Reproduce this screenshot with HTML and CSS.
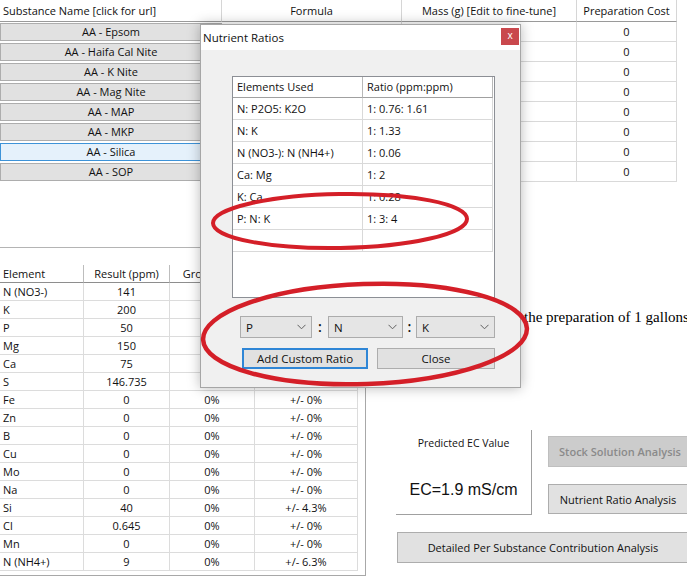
FILE: index.html
```html
<!DOCTYPE html>
<html>
<head>
<meta charset="utf-8">
<link rel="stylesheet" href="styles.css">
</head>
<body>
<div class="app">
  <div class="top-panel">
    <div class="grid-row head">
      <div class="hc left">Substance Name [click for url]</div>
      <div class="hc">Formula</div>
      <div class="hc">Mass (g) [Edit to fine-tune]</div>
      <div class="hc">Preparation Cost</div>
    </div>
    <div class="grid-row"><div class="bc"><button class="sbtn">AA - Epsom</button></div><div class="dc"></div><div class="dc"></div><div class="dc">0</div></div>
    <div class="grid-row"><div class="bc"><button class="sbtn">AA - Haifa Cal Nite</button></div><div class="dc"></div><div class="dc"></div><div class="dc">0</div></div>
    <div class="grid-row"><div class="bc"><button class="sbtn">AA - K Nite</button></div><div class="dc"></div><div class="dc"></div><div class="dc">0</div></div>
    <div class="grid-row"><div class="bc"><button class="sbtn">AA - Mag Nite</button></div><div class="dc"></div><div class="dc"></div><div class="dc">0</div></div>
    <div class="grid-row"><div class="bc"><button class="sbtn">AA - MAP</button></div><div class="dc"></div><div class="dc"></div><div class="dc">0</div></div>
    <div class="grid-row"><div class="bc"><button class="sbtn">AA - MKP</button></div><div class="dc"></div><div class="dc"></div><div class="dc">0</div></div>
    <div class="grid-row"><div class="bc"><button class="sbtn hot">AA - Silica</button></div><div class="dc"></div><div class="dc"></div><div class="dc">0</div></div>
    <div class="grid-row"><div class="bc"><button class="sbtn">AA - SOP</button></div><div class="dc"></div><div class="dc"></div><div class="dc">0</div></div>
  </div>
  <div class="divider"></div>

  <div class="lower">
    <div class="results">
      <div class="rrow rhead"><div class="rh left">Element</div><div class="rh">Result (ppm)</div><div class="rh">Gross Error</div><div class="rh">Instrument Error</div></div>
      <div class="rrow"><div class="rc left">N (NO3-)</div><div class="rc">141</div><div class="rc">0%</div><div class="rc">+/- 0%</div></div>
      <div class="rrow"><div class="rc left">K</div><div class="rc">200</div><div class="rc">0%</div><div class="rc">+/- 0%</div></div>
      <div class="rrow"><div class="rc left">P</div><div class="rc">50</div><div class="rc">0%</div><div class="rc">+/- 0%</div></div>
      <div class="rrow"><div class="rc left">Mg</div><div class="rc">150</div><div class="rc">0%</div><div class="rc">+/- 0%</div></div>
      <div class="rrow"><div class="rc left">Ca</div><div class="rc">75</div><div class="rc">0%</div><div class="rc">+/- 0%</div></div>
      <div class="rrow"><div class="rc left">S</div><div class="rc">146.735</div><div class="rc">0%</div><div class="rc">+/- 0%</div></div>
      <div class="rrow"><div class="rc left">Fe</div><div class="rc">0</div><div class="rc">0%</div><div class="rc">+/- 0%</div></div>
      <div class="rrow"><div class="rc left">Zn</div><div class="rc">0</div><div class="rc">0%</div><div class="rc">+/- 0%</div></div>
      <div class="rrow"><div class="rc left">B</div><div class="rc">0</div><div class="rc">0%</div><div class="rc">+/- 0%</div></div>
      <div class="rrow"><div class="rc left">Cu</div><div class="rc">0</div><div class="rc">0%</div><div class="rc">+/- 0%</div></div>
      <div class="rrow"><div class="rc left">Mo</div><div class="rc">0</div><div class="rc">0%</div><div class="rc">+/- 0%</div></div>
      <div class="rrow"><div class="rc left">Na</div><div class="rc">0</div><div class="rc">0%</div><div class="rc">+/- 0%</div></div>
      <div class="rrow"><div class="rc left">Si</div><div class="rc">40</div><div class="rc">0%</div><div class="rc">+/- 4.3%</div></div>
      <div class="rrow"><div class="rc left">Cl</div><div class="rc">0.645</div><div class="rc">0%</div><div class="rc">+/- 0%</div></div>
      <div class="rrow"><div class="rc left">Mn</div><div class="rc">0</div><div class="rc">0%</div><div class="rc">+/- 0%</div></div>
      <div class="rrow"><div class="rc left">N (NH4+)</div><div class="rc">9</div><div class="rc">0%</div><div class="rc">+/- 6.3%</div></div>
    </div>

    <div class="side">
      <p class="note">the preparation of 1 gallons of nutrient solution</p>
      <div class="ec-row">
        <div class="ec-box">
          <div class="ec-label">Predicted EC Value</div>
          <div class="ec-value">EC=1.9 mS/cm</div>
        </div>
        <div class="btn-col">
          <button class="wbtn stock" disabled>Stock Solution Analysis</button>
          <button class="wbtn ratio">Nutrient Ratio Analysis</button>
        </div>
      </div>
      <button class="wbtn wide">Detailed Per Substance Contribution Analysis</button>
    </div>
  </div>
</div>

<div class="dialog">
  <div class="titlebar">
    <span class="title">Nutrient Ratios</span>
    <span class="close">x</span>
  </div>
  <div class="dbody">
    <div class="rframe">
      <div class="drow dhead"><div class="dh">Elements Used</div><div class="dh">Ratio (ppm:ppm)</div></div>
      <div class="drow"><div class="dc2">N: P2O5: K2O</div><div class="dc2">1: 0.76: 1.61</div></div>
      <div class="drow"><div class="dc2">N: K</div><div class="dc2">1: 1.33</div></div>
      <div class="drow"><div class="dc2">N (NO3-): N (NH4+)</div><div class="dc2">1: 0.06</div></div>
      <div class="drow"><div class="dc2">Ca: Mg</div><div class="dc2">1: 2</div></div>
      <div class="drow"><div class="dc2">K: Ca</div><div class="dc2">1: 0.28</div></div>
      <div class="drow"><div class="dc2">P: N: K</div><div class="dc2">1: 3: 4</div></div>
      <div class="drow"><div class="dc2"></div><div class="dc2"></div></div>
    </div>
    <div class="combos">
      <div class="combo c1"><span>P</span><svg class="chev" width="9" height="6" viewBox="0 0 9 6"><polyline points="0.5,0.8 4.5,4.8 8.5,0.8" fill="none" stroke="#606060" stroke-width="1"/></svg></div>
      <span class="colon s1">:</span>
      <div class="combo c2"><span>N</span><svg class="chev" width="9" height="6" viewBox="0 0 9 6"><polyline points="0.5,0.8 4.5,4.8 8.5,0.8" fill="none" stroke="#606060" stroke-width="1"/></svg></div>
      <span class="colon s2">:</span>
      <div class="combo c3"><span>K</span><svg class="chev" width="9" height="6" viewBox="0 0 9 6"><polyline points="0.5,0.8 4.5,4.8 8.5,0.8" fill="none" stroke="#606060" stroke-width="1"/></svg></div>
    </div>
    <div class="dbtns">
      <button class="dbtn add">Add Custom Ratio</button>
      <button class="dbtn closebtn">Close</button>
    </div>
  </div>
</div>

<svg class="marks" width="687" height="581" viewBox="0 0 687 581">
  <ellipse cx="340" cy="221" rx="127" ry="27" transform="rotate(-1 340 221)" fill="none" stroke="#d41f28" stroke-width="4"/>
  <ellipse cx="365" cy="334" rx="162" ry="50" transform="rotate(-2 365 334)" fill="none" stroke="#d41f28" stroke-width="4.5"/>
</svg>
</body>
</html>
```

FILE: styles.css
```css
* { box-sizing: border-box; }
html, body { margin: 0; padding: 0; }
body {
  width: 687px;
  height: 581px;
  overflow: hidden;
  background: #ffffff;
  font-family: "Open Sans", "Noto Sans", sans-serif;
  font-size: 11px;
  color: #111;
  position: relative;
}
button { font-family: inherit; font-size: 11px; color: #111; padding: 0; margin: 0; }

/* top substance table */
.top-panel {
  height: 247px;
}
.divider {
  width: 366px;
  border-top: 1px solid #b4b4b4;
}
.grid-row {
  display: grid;
  grid-template-columns: 222px 180px 175px 100px;
  height: 20px;
}
.grid-row.head { height: 22px; }
.hc {
  border-bottom: 1px solid #9a9a9a;
  border-right: 1px solid #d6d6d6;
  text-align: center;
  line-height: 21px;
  white-space: nowrap;
  overflow: hidden;
}
.hc.left { text-align: left; padding-left: 3px; }
.bc { padding-top: 1px; }
.sbtn {
  display: block;
  width: 100%;
  height: 18px;
  background: #e1e1e1;
  border: 1px solid #adadad;
  line-height: 16px;
  text-align: center;
}
.sbtn.hot { background: #e5f1fb; border-color: #3d93d8; }
.dc {
  border-bottom: 1px solid #d9d9d9;
  border-right: 1px solid #d9d9d9;
  text-align: center;
  line-height: 19px;
}

/* lower area */
.lower {
  display: flex;
  margin-top: 16px;
}
.results {
  width: 366px;
  height: 312px;
  border-right: 1px solid #a8a8a8;
  border-bottom: 1px solid #a8a8a8;
  padding-top: 1px;
  flex: none;
}
.rrow {
  display: grid;
  grid-template-columns: 84px 86px 85px 103px;
  height: 18px;
}
.rh {
  border-bottom: 1px solid #8e8e8e;
  border-right: 1px solid #bdbdbd;
  text-align: center;
  line-height: 17px;
  white-space: nowrap;
  overflow: hidden;
}
.rh.left, .rc.left { text-align: left; padding-left: 3px; }
.rc {
  border-bottom: 1px solid #dcdcdc;
  border-right: 1px solid #dcdcdc;
  text-align: center;
  line-height: 17px;
  white-space: nowrap;
}

.side {
  flex: 1;
  min-width: 0;
}
.note {
  margin: 45px 0 0 0;
  padding-left: 158px;
  font-family: "Liberation Serif", serif;
  font-size: 15px;
  line-height: 17px;
  color: #000;
  white-space: nowrap;
  overflow: hidden;
}
.ec-row {
  display: flex;
  margin-top: 104px;
}
.ec-box {
  flex: none;
  margin-left: 30px;
  width: 136px;
  height: 85px;
  border-right: 1px solid #a0a0a0;
  border-bottom: 1px solid #a0a0a0;
  text-align: center;
}
.ec-label {
  padding-top: 6px;
  line-height: 15px;
  font-size: 10.5px;
}
.ec-value {
  margin-top: 30px;
  font-family: "Liberation Sans", Arial, sans-serif;
  font-size: 16px;
  line-height: 18px;
}
.btn-col {
  flex: none;
  margin-left: 16px;
  display: flex;
  flex-direction: column;
}
.wbtn {
  background: #e1e1e1;
  border: 1px solid #adadad;
  text-align: center;
  white-space: nowrap;
}
.stock {
  margin-top: 6px;
  width: 144px;
  height: 31px;
  background: #cccccc;
  border-color: #bfbfbf;
  color: #8a8a8a;
  font-weight: 600;
}
.ratio {
  margin-top: 17px;
  width: 140px;
  height: 30px;
}
.wide {
  display: block;
  margin-top: 17px;
  margin-left: 31px;
  width: 292px;
  height: 31px;
}

/* dialog */
.dialog {
  position: absolute;
  left: 200px;
  top: 24px;
  width: 321px;
  height: 364px;
  border: 1px solid #a6a6a6;
  background: #f0f0f0;
  box-shadow: 0 0 12px rgba(0,0,0,0.28);
}
.titlebar {
  height: 25px;
  background: #ffffff;
  display: flex;
  align-items: center;
  justify-content: space-between;
  padding-left: 2px;
  padding-right: 1px;
}
.title { font-size: 11.5px; line-height: 25px; }
.close {
  width: 18px;
  height: 17px;
  background: #c9484d;
  color: #fff;
  font-size: 10px;
  line-height: 15px;
  text-align: center;
  align-self: flex-start;
  margin-top: 3px;
}
.dbody { padding: 26px 0 0 31px; }
.rframe {
  width: 263px;
  height: 222px;
  background: #fff;
  border: 1px solid #8c8f95;
}
.drow {
  display: grid;
  grid-template-columns: 130px 130px;
  height: 22px;
}
.drow.dhead { height: 21px; }
.dh {
  border-bottom: 1px solid #a0a0a0;
  border-right: 1px solid #b8b8b8;
  padding-left: 4px;
  line-height: 20px;
}
.dc2 {
  border-bottom: 1px solid #d9d9d9;
  border-right: 1px solid #d9d9d9;
  padding-left: 4px;
  line-height: 21px;
  white-space: nowrap;
}
.combos {
  display: flex;
  align-items: center;
  margin-top: 18px;
  margin-left: 8px;
  height: 22px;
}
.combo {
  height: 22px;
  background: #e5e5e5;
  border: 1px solid #acacac;
  display: flex;
  align-items: center;
  justify-content: space-between;
  padding: 0 5px 0 5px;
  font-size: 11.5px;
}
.c1 { width: 72px; }
.c2 { width: 75px; }
.c3 { width: 79px; }
.colon {
  text-align: center;
  font-size: 14px;
  font-weight: 600;
  line-height: 20px;
}
.s1 { width: 16px; }
.s2 { width: 13px; }
.dbtns {
  display: flex;
  margin-top: 10px;
  margin-left: 10px;
}
.dbtn {
  height: 21px;
  background: #e1e1e1;
  border: 1px solid #adadad;
  font-size: 11.5px;
}
.add { width: 126px; border: 2px solid #2f86d6; }
.closebtn { width: 118px; margin-left: 9px; }

.marks {
  position: absolute;
  left: 0;
  top: 0;
  pointer-events: none;
}
```
